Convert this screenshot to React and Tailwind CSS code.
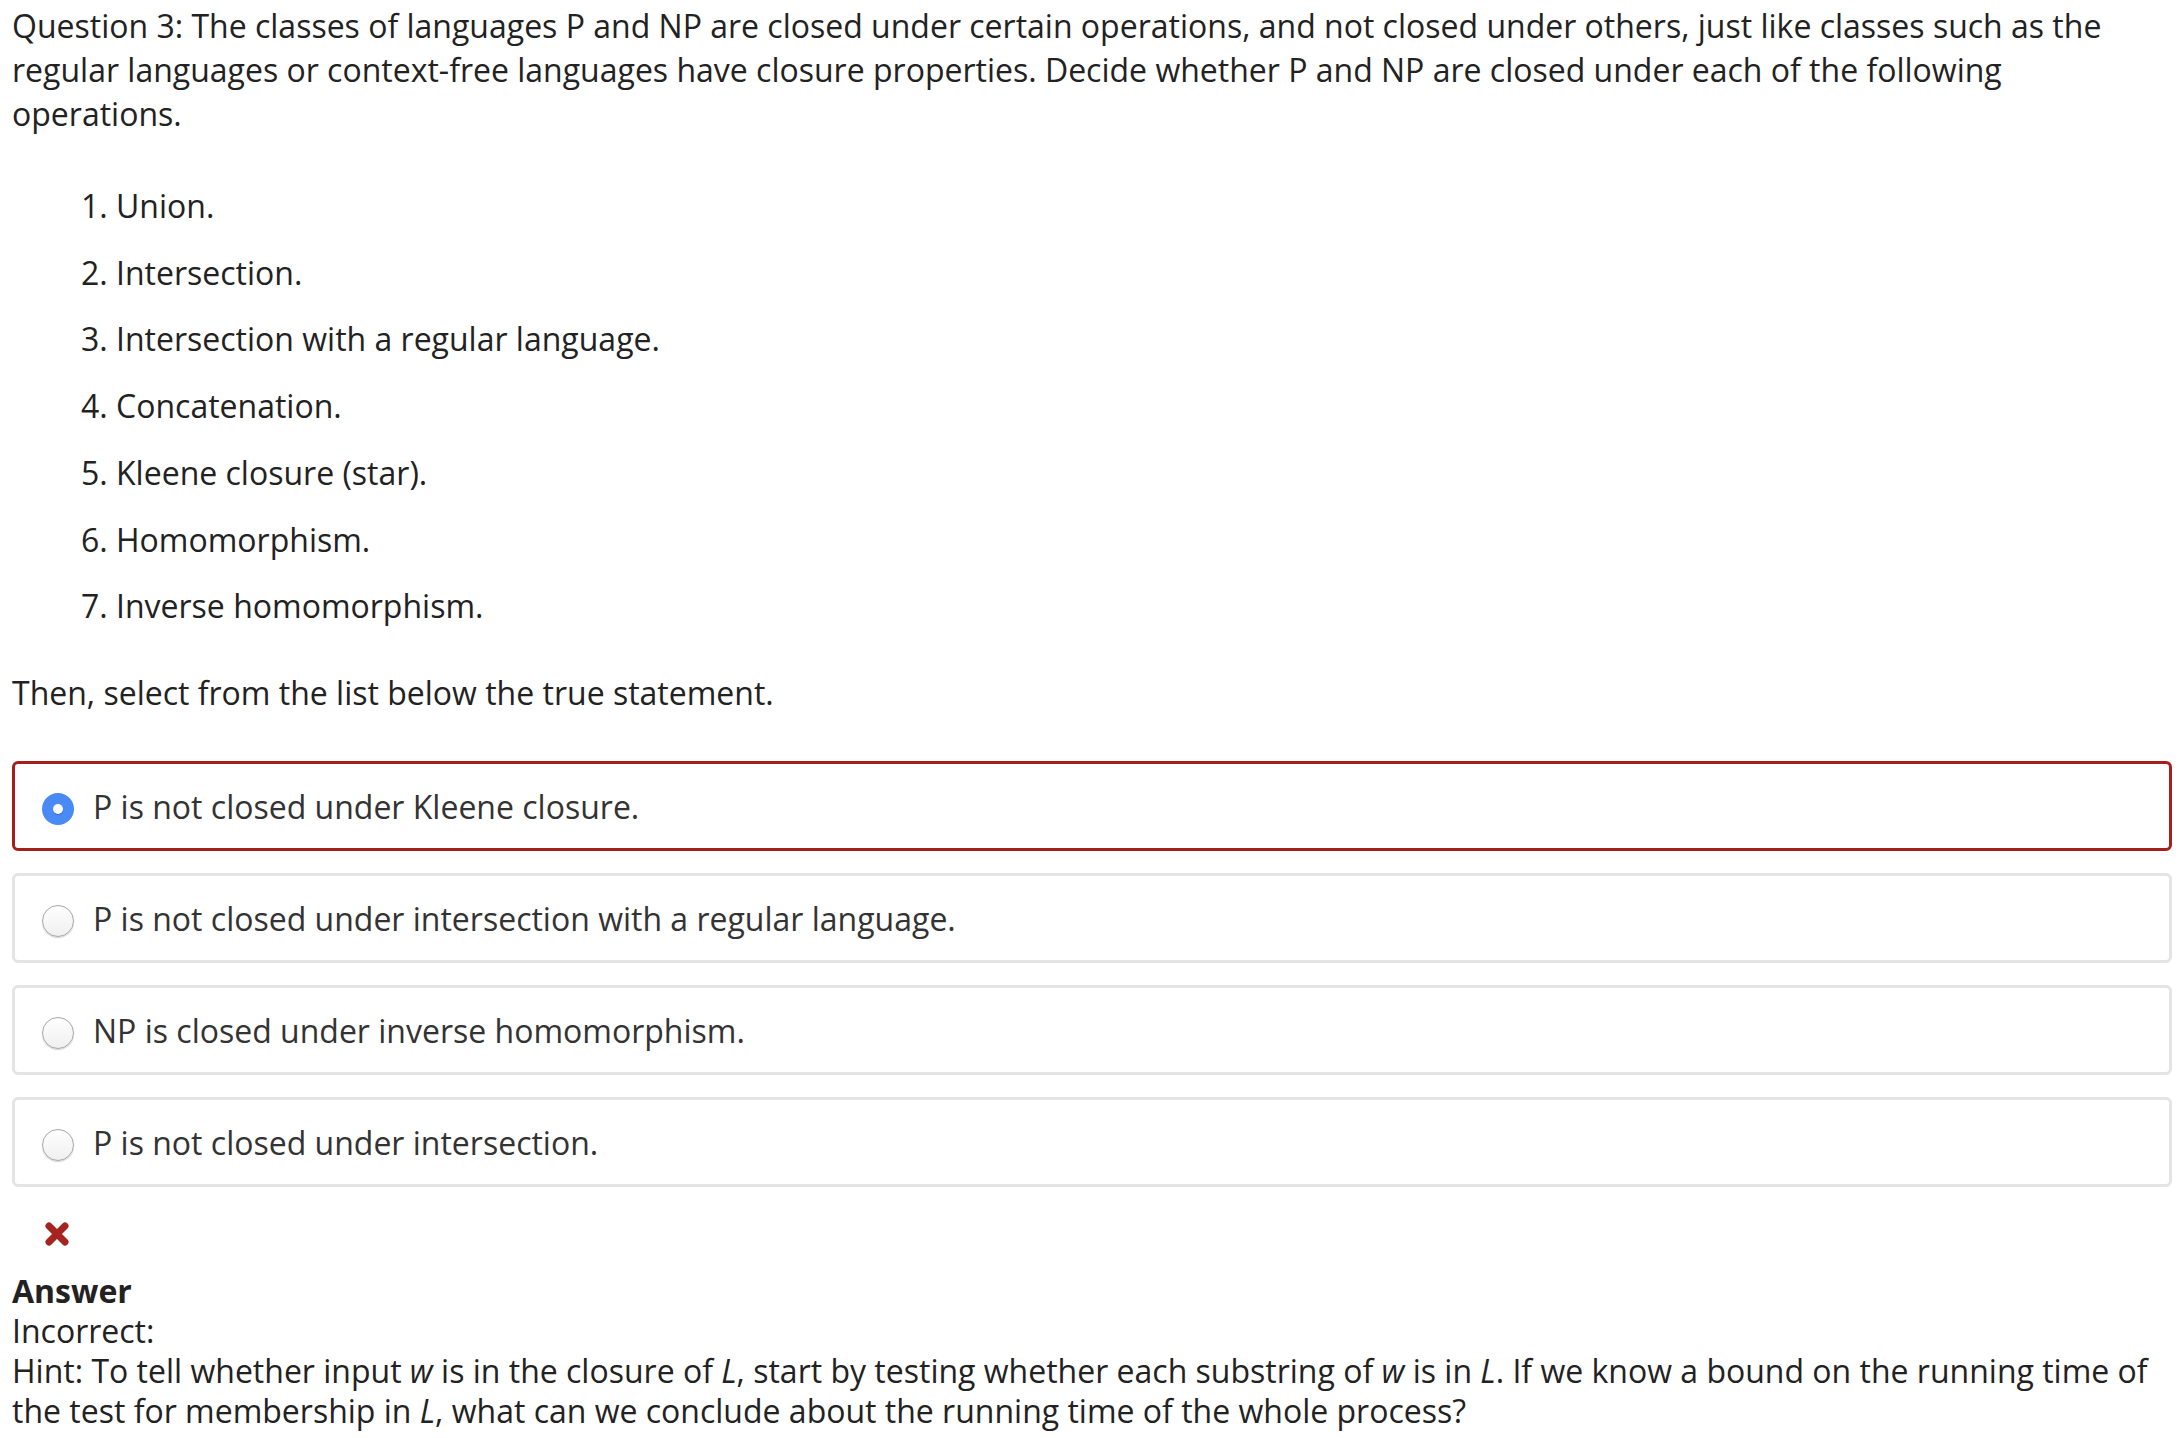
import React, { useState } from "react";

const operations = [
  "Union.",
  "Intersection.",
  "Intersection with a regular language.",
  "Concatenation.",
  "Kleene closure (star).",
  "Homomorphism.",
  "Inverse homomorphism.",
];

const choices = [
  "P is not closed under Kleene closure.",
  "P is not closed under intersection with a regular language.",
  "NP is closed under inverse homomorphism.",
  "P is not closed under intersection.",
];

const Radio = ({ checked }) =>
  checked ? (
    <span className="flex h-[32px] w-[32px] shrink-0 items-center justify-center rounded-full bg-[#4a8af4]">
      <span className="block h-[10px] w-[10px] rounded-full bg-white shadow-[0_1px_1px_rgba(0,0,0,0.25)]" />
    </span>
  ) : (
    <span className="block h-[32px] w-[32px] shrink-0 rounded-full border border-[#a8a8a8] bg-gradient-to-b from-white to-[#f0f0f0] shadow-[0_1px_1px_rgba(0,0,0,0.18)]" />
  );

const App = () => {
  const [selected, setSelected] = useState(0);

  return (
    <div className="min-h-screen bg-white px-3 pt-[4px] font-['Open_Sans',sans-serif] text-[#222]">
      <p className="text-[32px] leading-[44px]">
        Question 3: The classes of languages P and NP are closed under certain operations, and not
        closed under others, just like classes such as the regular languages or context-free
        languages have closure properties. Decide whether P and NP are closed under each of the
        following operations.
      </p>

      <div className="mt-[37px] pl-[69px]">
        {operations.map((op, i) => (
          <div key={op} className="text-[32px] leading-[66.7px]">
            {i + 1}. {op}
          </div>
        ))}
      </div>

      <p className="mt-[31px] text-[32px] leading-[44px]">
        Then, select from the list below the true statement.
      </p>

      <div className="mt-[46px] flex flex-col gap-[22px]">
        {choices.map((c, i) => (
          <div
            key={c}
            onClick={() => setSelected(i)}
            className={`flex h-[90px] cursor-pointer items-center rounded-[6px] border-[3px] pl-[27px] ${
              i === selected ? "border-[#a51f1c]" : "border-[#e4e4e4]"
            }`}
          >
            <span className="mt-[6px] block">
              <Radio checked={i === selected} />
            </span>
            <span className="ml-[19px] mt-[2px] text-[32px] text-[#333]">{c}</span>
          </div>
        ))}
      </div>

      <div className="mt-[34px] pl-[32px]">
        <svg width="26" height="26" viewBox="0 0 26 26">
          <path d="M5 5 L21 21 M21 5 L5 21" stroke="#a52420" strokeWidth="7" strokeLinecap="round" />
        </svg>
      </div>

      <div className="mt-[24px] text-[32px] leading-[40px]">
        <div className="font-bold">Answer</div>
        <div>Incorrect:</div>
        <div>
          Hint: To tell whether input <i>w</i> is in the closure of <i>L</i>, start by testing
          whether each substring of <i>w</i> is in <i>L</i>. If we know a bound on the running time
          of the test for membership in <i>L</i>, what can we conclude about the running time of
          the whole process?
        </div>
      </div>
    </div>
  );
};

export default App;
